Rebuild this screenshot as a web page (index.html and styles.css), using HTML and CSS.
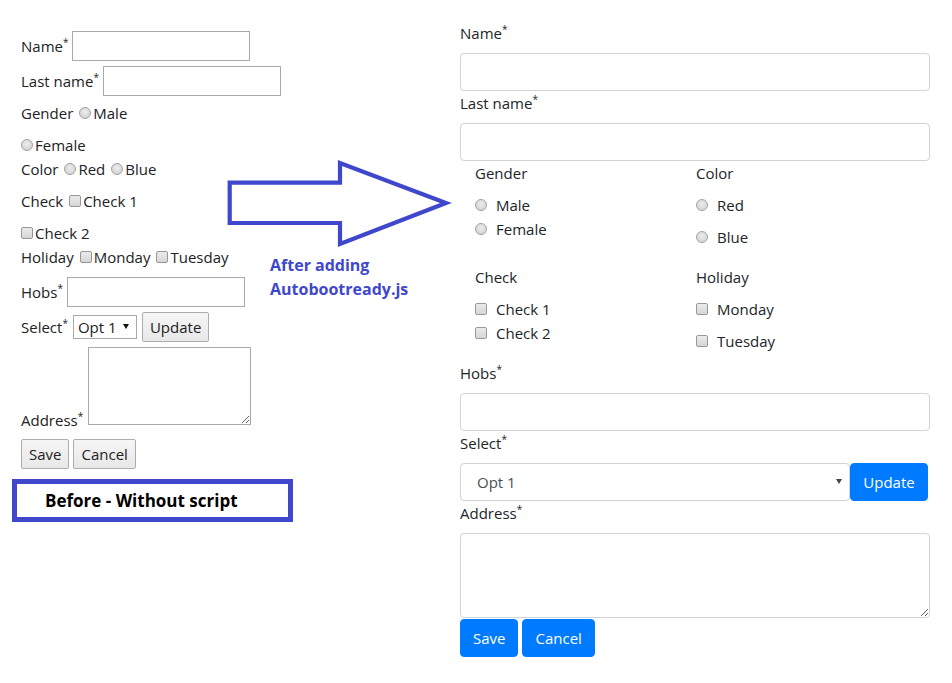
FILE: index.html
```html
<!DOCTYPE html>
<html lang="en">
<head>
<meta charset="utf-8">
<title>Autobootready demo</title>
<link rel="stylesheet" href="styles.css">
</head>
<body>
<div class="page">
  <section class="before">
    <form class="plain">
      <div class="prow prow-field"><label class="pl">Name<sup>*</sup></label><input class="ptext" type="text"></div>
      <div class="prow prow-field mt5"><label class="pl">Last name<sup>*</sup></label><input class="ptext" type="text"></div>
      <div class="prow mt5"><span class="pl">Gender</span><input type="radio" name="g1" class="rb"><span>Male</span></div>
      <div class="prow mt8"><input type="radio" name="g1" class="rb lead"><span>Female</span></div>
      <div class="prow"><span class="pl">Color</span><input type="radio" name="c1" class="rb"><span>Red</span><input type="radio" name="c1" class="rb"><span>Blue</span></div>
      <div class="prow mt8"><span class="pl">Check</span><input type="checkbox" class="cb"><span>Check 1</span></div>
      <div class="prow mt8"><input type="checkbox" class="cb lead"><span>Check 2</span></div>
      <div class="prow"><span class="pl">Holiday</span><input type="checkbox" class="cb"><span>Monday</span><input type="checkbox" class="cb"><span>Tuesday</span></div>
      <div class="prow prow-field mt8"><label class="pl">Hobs<sup>*</sup></label><input class="ptext" type="text"></div>
      <div class="prow prow-field mt5"><label class="pl">Select<sup>*</sup></label><span class="psel-wrap"><select class="psel"><option>Opt 1</option></select></span><button type="button" class="pbtn pbtn-upd">Update</button></div>
      <div class="prow prow-area mt5"><label class="pl pl-area">Address<sup>*</sup></label><textarea class="parea"></textarea></div>
      <div class="prow prow-field mt14"><button type="button" class="pbtn">Save</button><button type="button" class="pbtn pbtn-next">Cancel</button></div>
    </form>
    <div class="before-tag">Before - Without script</div>
  </section>

  <div class="annot">
    <svg class="arrow" width="240" height="110" viewBox="0 0 240 110" aria-hidden="true">
      <polygon points="9.7,32.7 120,32.7 120,13 226,53 120,94 120,73 9.7,73" fill="none" stroke="#3f48cc" stroke-width="4.2" stroke-linejoin="miter"/>
    </svg>
    <p class="annot-text">After adding<br>Autobootready.js</p>
  </div>

  <section class="after">
    <div class="fg"><label class="flabel">Name<sup>*</sup></label><input class="fc" type="text"></div>
    <div class="fg"><label class="flabel">Last name<sup>*</sup></label><input class="fc" type="text"></div>
    <div class="choices">
      <div class="grp">
        <div class="glabel">Gender</div>
        <label class="opt"><input type="radio" name="g2" class="rb"><span>Male</span></label>
        <label class="opt"><input type="radio" name="g2" class="rb"><span>Female</span></label>
      </div>
      <div class="grp spaced">
        <div class="glabel">Color</div>
        <label class="opt"><input type="radio" name="c2" class="rb"><span>Red</span></label>
        <label class="opt"><input type="radio" name="c2" class="rb"><span>Blue</span></label>
      </div>
      <div class="grp">
        <div class="glabel">Check</div>
        <label class="opt"><input type="checkbox" class="cb"><span>Check 1</span></label>
        <label class="opt"><input type="checkbox" class="cb"><span>Check 2</span></label>
      </div>
      <div class="grp spaced">
        <div class="glabel">Holiday</div>
        <label class="opt"><input type="checkbox" class="cb"><span>Monday</span></label>
        <label class="opt"><input type="checkbox" class="cb"><span>Tuesday</span></label>
      </div>
    </div>
    <div class="fg"><label class="flabel">Hobs<sup>*</sup></label><input class="fc" type="text"></div>
    <div class="fg">
      <label class="flabel">Select<sup>*</sup></label>
      <div class="igroup">
        <span class="fsel-wrap"><select class="fc fsel"><option>Opt 1</option></select></span>
        <button type="button" class="btnp btn-upd">Update</button>
      </div>
    </div>
    <div class="fg"><label class="flabel">Address<sup>*</sup></label><textarea class="fc farea"></textarea></div>
    <div class="actions">
      <button type="button" class="btnp">Save</button>
      <button type="button" class="btnp">Cancel</button>
    </div>
  </section>
</div>
</body>
</html>
```

FILE: styles.css
```css
* { box-sizing: border-box; }

body {
  margin: 0;
  background: #fff;
  font-family: "Open Sans", "Noto Sans", sans-serif;
  font-size: 15px;
  color: #222;
}

.page {
  position: relative;
  display: flex;
  width: 952px;
  height: 683px;
  overflow: hidden;
}

sup {
  font-size: 10px;
  line-height: 0;
  vertical-align: 6px;
}

/* ---------- left: plain form ---------- */
.before {
  width: 460px;
  padding: 31px 0 0 12px;
}

.plain {
  margin-left: 9px;
  display: flex;
  flex-direction: column;
}

.prow {
  display: flex;
  align-items: center;
  height: 24px;
  white-space: nowrap;
}
.prow-field { height: 30px; }
.prow-area { height: 78px; align-items: flex-end; }

.mt5 { margin-top: 5px; }
.mt8 { margin-top: 8px; }
.mt14 { margin-top: 14px; }

.pl-area { margin-bottom: -5px; }

.ptext {
  width: 178px;
  height: 30px;
  margin-left: 4px;
  border: 1px solid #a9a9a9;
  border-radius: 0;
  font: inherit;
  padding: 0 3px;
  background: #fff;
}

.rb, .cb {
  appearance: none;
  -webkit-appearance: none;
  flex: none;
  width: 12px;
  height: 12px;
  margin: 0 2px 0 6px;
  border: 1px solid #a2a2a2;
  background: radial-gradient(circle at 50% 40%, #ececec 0%, #dadada 60%, #cacaca 100%);
}
.rb { border-radius: 50%; }
.cb { border-radius: 2px; border-color: #989898; background: linear-gradient(#ebebeb, #d6d6d6); }
.lead { margin-left: 0; }

.psel-wrap {
  position: relative;
  margin-left: 5px;
}
.psel-wrap::after {
  content: "";
  position: absolute;
  right: 8px;
  top: 9px;
  border-left: 3.5px solid transparent;
  border-right: 3.5px solid transparent;
  border-top: 5px solid #111;
  pointer-events: none;
}
.psel {
  appearance: none;
  -webkit-appearance: none;
  width: 64px;
  height: 24px;
  padding: 0 0 0 4px;
  border: 1px solid #a9a9a9;
  border-radius: 0;
  background: #fff;
  color: #222;
  font: inherit;
}

.pbtn {
  height: 30px;
  padding: 0 7px;
  border: 1px solid #adadad;
  border-radius: 2px;
  background: linear-gradient(#f6f6f6, #e8e8e8);
  color: #222;
  font: inherit;
}
.pbtn-upd { margin-left: 5px; }
.pbtn-next { margin-left: 4px; }

.parea {
  width: 163px;
  height: 78px;
  margin-left: 5px;
  border: 1px solid #a9a9a9;
  border-radius: 0;
  font: inherit;
}

.before-tag {
  display: flex;
  align-items: center;
  width: 281px;
  height: 43px;
  margin-top: 10px;
  padding-left: 28px;
  border: 5px solid #3f48cc;
  font-weight: 700;
  font-size: 17px;
  color: #000;
}

/* ---------- annotation ---------- */
.annot {
  position: absolute;
  left: 220px;
  top: 150px;
  width: 240px;
  height: 160px;
}
.arrow { display: block; }
.annot-text {
  position: absolute;
  left: 50px;
  top: 103px;
  margin: 0;
  font-size: 16px;
  font-weight: 700;
  line-height: 24px;
  color: #3f48cc;
}

/* ---------- right: bootstrap-like form ---------- */
.after {
  width: 470px;
  padding-top: 21px;
  color: #212529;
}

.flabel {
  display: block;
  line-height: 24px;
  margin-bottom: 8px;
}

.fc {
  display: block;
  width: 100%;
  height: 38px;
  padding: 0 12px;
  border: 1px solid #ced4da;
  border-radius: 4px;
  background: #fff;
  font: inherit;
  color: #495057;
}

.choices {
  display: grid;
  grid-template-columns: 221px 1fr;
  row-gap: 16px;
  padding-left: 15px;
  margin: 0 0 8px;
}
.glabel {
  line-height: 24px;
  margin-bottom: 8px;
}
.opt {
  display: flex;
  align-items: center;
  height: 24px;
}
.opt .rb, .opt .cb { margin: 0 9px 0 0; }
.spaced .opt + .opt { margin-top: 8px; }

.igroup { display: flex; }
.fsel-wrap {
  position: relative;
  flex: 1;
}
.fsel-wrap::after {
  content: "";
  position: absolute;
  right: 8px;
  top: 16px;
  border-left: 3px solid transparent;
  border-right: 3px solid transparent;
  border-top: 5px solid #444;
  pointer-events: none;
}
.fsel {
  appearance: none;
  -webkit-appearance: none;
  padding-left: 16px;
}

.btnp {
  height: 38px;
  padding: 0 12px;
  border: 1px solid #007bff;
  border-radius: 4px;
  background: #007bff;
  color: #fff;
  font: inherit;
}
.btn-upd {
  width: 78px;
  margin: 0 2px 0 0;
  padding: 0;
}

.farea {
  height: 85px;
  padding: 6px 12px;
}

.actions {
  display: flex;
  gap: 4px;
  margin-top: 1px;
}
```
